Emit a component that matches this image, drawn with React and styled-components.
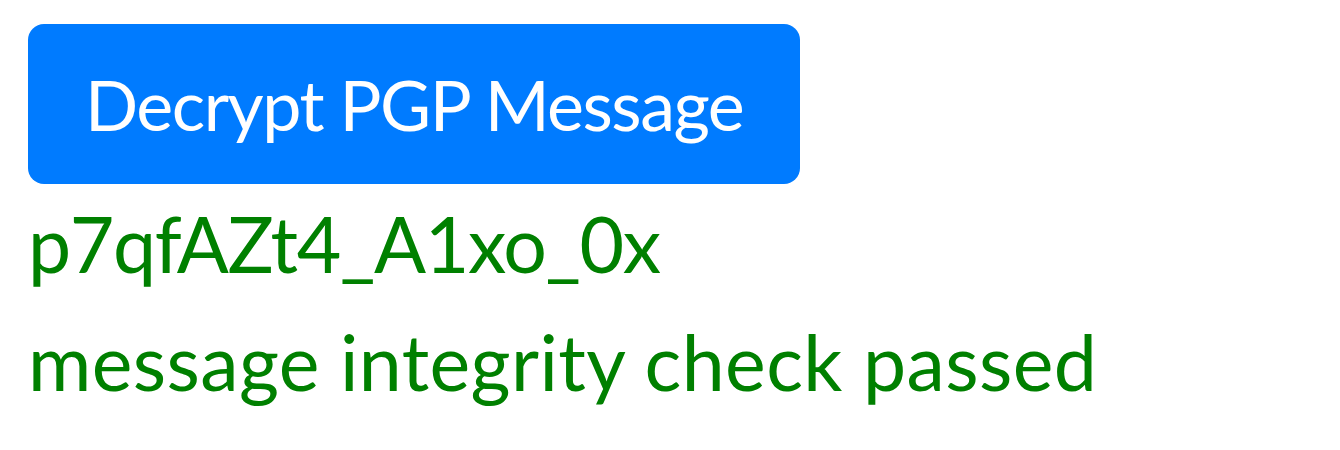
import React from 'react';
import styled, { createGlobalStyle } from 'styled-components';

const GlobalStyle = createGlobalStyle`
  body {
    margin: 0;
    background: #fff;
    font-family: Lato, "Noto Sans", sans-serif;
  }
`;

const SPage = styled.main`
  display: flex;
  flex-direction: column;
  align-items: flex-start;
  padding: 24px 28px;
`;

const SButton = styled.button`
  height: 160px;
  padding: 0 57px;
  border: none;
  border-radius: 16px;
  background: #007bff;
  color: #fff;
  font-family: inherit;
  font-size: 70px;
  line-height: 1;
  letter-spacing: -1.5px;
  cursor: pointer;
`;

const SResult = styled.p`
  margin: 0;
  color: green;
  font-size: 77px;
  line-height: 118px;
  letter-spacing: ${(p) => p.$spacing || 0}px;
`;

export default function App() {
  return (
    <>
      <GlobalStyle />
      <SPage>
        <SButton>Decrypt PGP Message</SButton>
        <SResult $spacing={-1.4}>p7qfAZt4_A1xo_0x</SResult>
        <SResult $spacing={0.4}>message integrity check passed</SResult>
      </SPage>
    </>
  );
}
